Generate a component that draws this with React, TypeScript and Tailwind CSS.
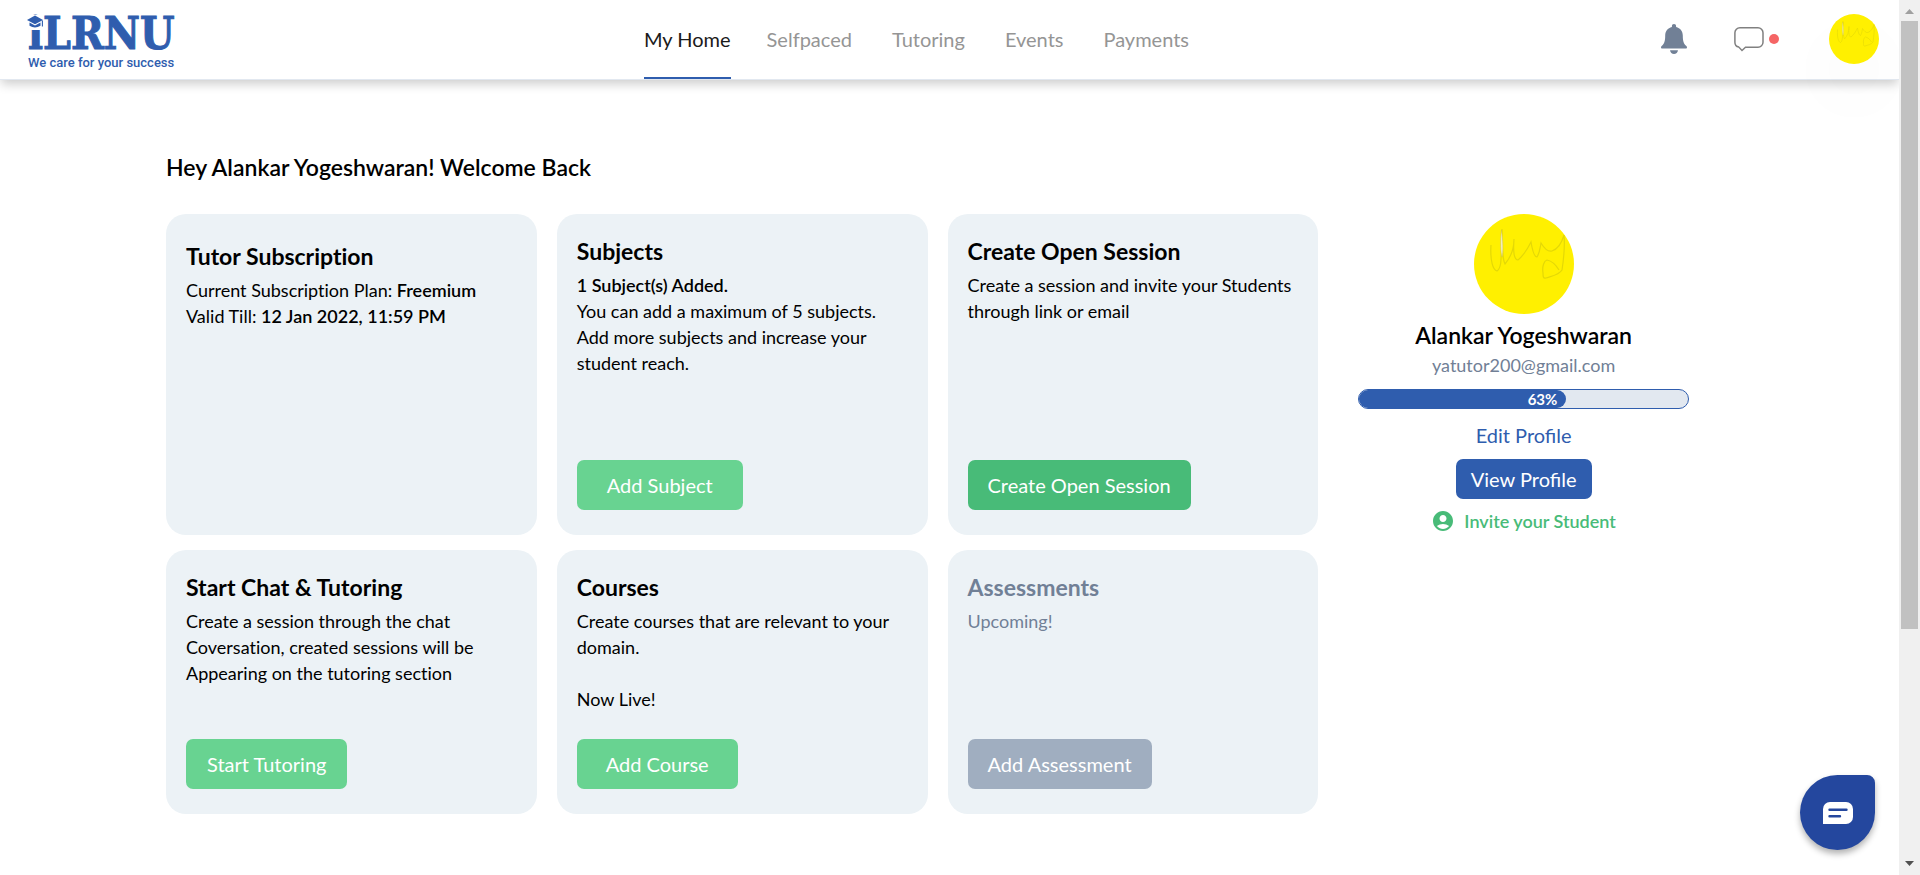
import React from "react";
import { MdAccountCircle } from "react-icons/md";

const navLinks = ["Selfpaced", "Tutoring", "Events", "Payments"];

function Logo() {
  return (
    <a href="#" aria-label="iLRNU home" className="relative flex flex-col pl-7 text-[#2f5dae]">
      <span className="font-['DejaVu_Serif_Condensed','DejaVu_Serif',serif] text-[44px] leading-[44px] font-bold [-webkit-text-stroke:1px_#2f5dae]">
        iLRNU
      </span>
      <span className="font-[Roboto,sans-serif] text-[13px] leading-[14px] font-medium">We care for your success</span>
      <svg className="absolute top-[3px] left-[27px] h-[15px] w-[17px]" viewBox="0 0 17 15" aria-hidden="true">
        <path d="M0 0h16v15H0z" fill="#fff" />
        <path d="M0 5 8 .5 16 5 8 9.200z" fill="currentColor" />
        <path d="M2.500 7.600 8 10.500l5.500-2.900v3.200q-5.500 3.400-11 0z" fill="currentColor" />
        <path d="M15.400 5.500v6" stroke="currentColor" strokeWidth="1.100" />
      </svg>
    </a>
  );
}

function Avatar({ className }: { className: string }) {
  return (
    <svg className={className} viewBox="0 0 100 100" role="img" aria-label="Alankar Yogeshwaran">
      <circle cx="50" cy="50" r="50" fill="#fff000" />
      <path
        d="M17 31C16 47 19 56 23 57C28 54 27 44 28 15C28 31 28 44 31 50C37 43 40 36 40 25C39 38 40 46 44 46C50 41 53 36 57 28C58 34 60 43 63 43C66 38 66 34 67 29C70 34 74 38 78 37C84 35 88 28 90 21C91 32 90 43 88 56C85 61 78 62 72 64C69 65 69 62 69 59C68 52 70 47 73 46C78 47 82 51 85 56"
        fill="none"
        stroke="#e4d806"
        strokeWidth="1.200"
      />
      <path d="M27.500 16C26 28 26.500 38 28 43C29.500 38 29 26 27.500 16Z" fill="#f3efc4" stroke="#cfc540" strokeWidth=".5" />
    </svg>
  );
}

function Header() {
  return (
    <header className="relative grid h-20 grid-cols-[1fr_auto_1fr] border-b border-[#e2e8f0] bg-white shadow-[0_5px_10px_-1px_rgba(0,0,0,0.2)]">
      <div className="flex items-start pt-3">
        <Logo />
      </div>
      <nav className="flex gap-9 pr-[66px] text-xl text-[#959595]">
        <a href="#" className="flex items-center border-b-2 border-[#2f5dae] text-[#1a1a1a]">
          My Home
        </a>
        <div className="flex gap-10 pb-px">
          {navLinks.map((label) => (
            <a key={label} href="#" className="flex items-center">
              {label}
            </a>
          ))}
        </div>
      </nav>
      <div className="flex items-center justify-end pr-5 pb-0.5">
        <button aria-label="Notifications" className="mr-[47px] text-[#718096]">
          <svg className="h-[30px] w-[26px]" viewBox="0 0 26 30" fill="currentColor" aria-hidden="true">
            <path d="M13 0c1.300 0 2.100.9 2.100 2.300v.6c4.200 1 6.700 4.300 6.700 8.600 0 5.500.8 8 3.300 10.300.6.500.9 1 .9 1.600 0 .7-.5 1.200-1.300 1.200H1.300C.5 24.600 0 24.100 0 23.400c0-.6.300-1.100.9-1.600 2.500-2.300 3.300-4.800 3.300-10.300 0-4.300 2.500-7.600 6.700-8.600v-.6C10.900.9 11.700 0 13 0z" />
            <path d="M9 26.200h8c-.3 2.300-1.900 3.700-4 3.700s-3.700-1.400-4-3.700z" />
          </svg>
        </button>
        <button aria-label="Messages" className="mr-[50px] flex items-center gap-[5px]">
          <svg className="h-[26px] w-[30px]" viewBox="0 0 30 26" fill="none" stroke="#808080" strokeWidth="1.500" aria-hidden="true">
            <path d="M6 1.700h18a5 5 0 0 1 5 5v9.600a5 5 0 0 1-5 5H11.500L8 24.500l-3.200-3.400a5 5 0 0 1-3.900-4.900V6.700a5 5 0 0 1 5-5z" />
          </svg>
          <span className="size-[10px] rounded-full bg-[#f56565]" />
        </button>
        <button aria-label="Account" className="rounded-full shadow-[0_30px_60px_10px_rgba(0,0,0,0.02)]">
          <Avatar className="size-[50px]" />
        </button>
      </div>
    </header>
  );
}

interface CardProps {
  title: string;
  children: React.ReactNode;
  action?: string;
  actionClass?: string;
  className?: string;
  disabled?: boolean;
}

function Card({ title, children, action, actionClass = "", className = "pt-5", disabled }: CardProps) {
  return (
    <section
      className={`flex flex-col items-start rounded-[20px] bg-[#ecf2f6] px-5 pb-[25px] [font-variant-ligatures:none] ${className}`}
    >
      <h2 className="text-[23px] leading-[34px] font-bold">{title}</h2>
      <div className="pt-1 text-lg leading-[26px]">{children}</div>
      {action && (
        <button disabled={disabled} className={`mt-auto h-[50px] rounded-[7px] text-xl text-white ${actionClass}`}>
          {action}
        </button>
      )}
    </section>
  );
}

function Profile() {
  const progress = 63;
  return (
    <aside className="flex flex-col items-center px-5">
      <Avatar className="size-[100px]" />
      <h2 className="mt-1 text-[23px] leading-[34px] font-semibold">Alankar Yogeshwaran</h2>
      <p className="text-lg leading-[26px] text-[#718096]">yatutor200@gmail.com</p>
      <div
        role="progressbar"
        aria-label="Profile completion"
        aria-valuenow={progress}
        className="mt-[11px] h-5 w-full overflow-hidden rounded-full border border-[#2f5dae] bg-[#e2e8f0]"
      >
        <div
          className="h-full rounded-r-full bg-[#2f5dae] pr-[9px] text-right text-[15px] leading-[18px] font-bold text-white"
          style={{ width: `${progress}%` }}
        >
          {progress}%
        </div>
      </div>
      <a href="#" className="mt-[11px] text-xl leading-[30px] text-[#2f5dae]">
        Edit Profile
      </a>
      <button className="mt-[9px] h-10 rounded-[7px] bg-[#2f5dae] px-[15px] text-xl text-white">View Profile</button>
      <a href="#" className="mt-[10px] flex items-center gap-[9px] text-lg leading-6 font-semibold text-[#48bb78]">
        <MdAccountCircle className="size-6" aria-hidden="true" />
        Invite your Student
      </a>
    </aside>
  );
}

function PageScrollbar() {
  return (
    <div aria-hidden="true" className="sticky top-0 flex h-screen w-[21px] shrink-0 flex-col items-center bg-[#f0f0f0]">
      <svg className="h-[21px] w-[21px] shrink-0" viewBox="0 0 21 21">
        <path d="M6 14 10.500 9 15 14z" fill="#a0a0a0" />
      </svg>
      <div className="flex w-[17px] flex-1 flex-col">
        <div className="h-[73%] bg-[#c1c1c1]" />
      </div>
      <svg className="h-[21px] w-[21px] shrink-0" viewBox="0 0 21 21">
        <path d="M6 7h9l-4.500 5z" fill="#505050" />
      </svg>
    </div>
  );
}

export default function App() {
  return (
    <div className="flex min-h-screen bg-white font-[Lato,sans-serif] text-black">
      <div className="min-w-0 flex-1">
        <Header />
        <main className="pt-[70px] pr-[190px] pl-[166px]">
          <h1 className="text-[23px] leading-[34px] font-semibold">Hey Alankar Yogeshwaran! Welcome Back</h1>
          <div className="mt-[30px] grid grid-cols-4 gap-5">
            <div className="col-span-3 grid grid-cols-3 grid-rows-[321px_264px] gap-x-5 gap-y-[15px]">
              <Card title="Tutor Subscription" className="pt-[25px]">
                <p>
                  Current Subscription Plan: <span className="font-semibold">Freemium</span>
                </p>
                <p>
                  Valid Till: <span className="font-semibold">12 Jan 2022, 11:59 PM</span>
                </p>
              </Card>
              <Card title="Subjects" action="Add Subject" actionClass="bg-[#68d391] px-[30px]">
                <p className="font-semibold">1 Subject(s) Added.</p>
                <p>
                  You can add a maximum of 5 subjects.
                  <br />
                  Add more subjects and increase your
                  <br />
                  student reach.
                </p>
              </Card>
              <Card title="Create Open Session" action="Create Open Session" actionClass="bg-[#48bb78] px-5">
                <p>
                  Create a session and invite your Students
                  <br />
                  through link or email
                </p>
              </Card>
              <Card title="Start Chat & Tutoring" action="Start Tutoring" actionClass="bg-[#68d391] px-[21px]">
                <p>
                  Create a session through the chat
                  <br />
                  Coversation, created sessions will be
                  <br />
                  Appearing on the tutoring section
                </p>
              </Card>
              <Card title="Courses" action="Add Course" actionClass="bg-[#68d391] px-[29px]">
                <p>
                  Create courses that are relevant to your
                  <br />
                  domain.
                </p>
                <p className="pt-[26px]">Now Live!</p>
              </Card>
              <Card
                title="Assessments"
                action="Add Assessment"
                actionClass="bg-[#a0aec0] px-5"
                className="pt-5 text-[#718096]"
                disabled
              >
                <p>Upcoming!</p>
              </Card>
            </div>
            <Profile />
          </div>
        </main>
      </div>
      <PageScrollbar />
      <button
        aria-label="Open chat"
        className="fixed right-[45px] bottom-[25px] flex size-[75px] items-center justify-center rounded-[38px] rounded-tr-lg bg-[#24479e] shadow-[0_4px_6px_rgba(0,0,0,0.3)]"
      >
        <svg className="h-[22px] w-[30px]" viewBox="0 0 30 22" aria-hidden="true">
          <path d="M7 0h16a7 7 0 0 1 7 7v8a7 7 0 0 1-7 7H0V7a7 7 0 0 1 7-7z" fill="#fff" />
          <path d="M6.500 7.700h17M6.500 14.300h10.500" stroke="#24479e" strokeWidth="2.400" strokeLinecap="round" />
        </svg>
      </button>
    </div>
  );
}
